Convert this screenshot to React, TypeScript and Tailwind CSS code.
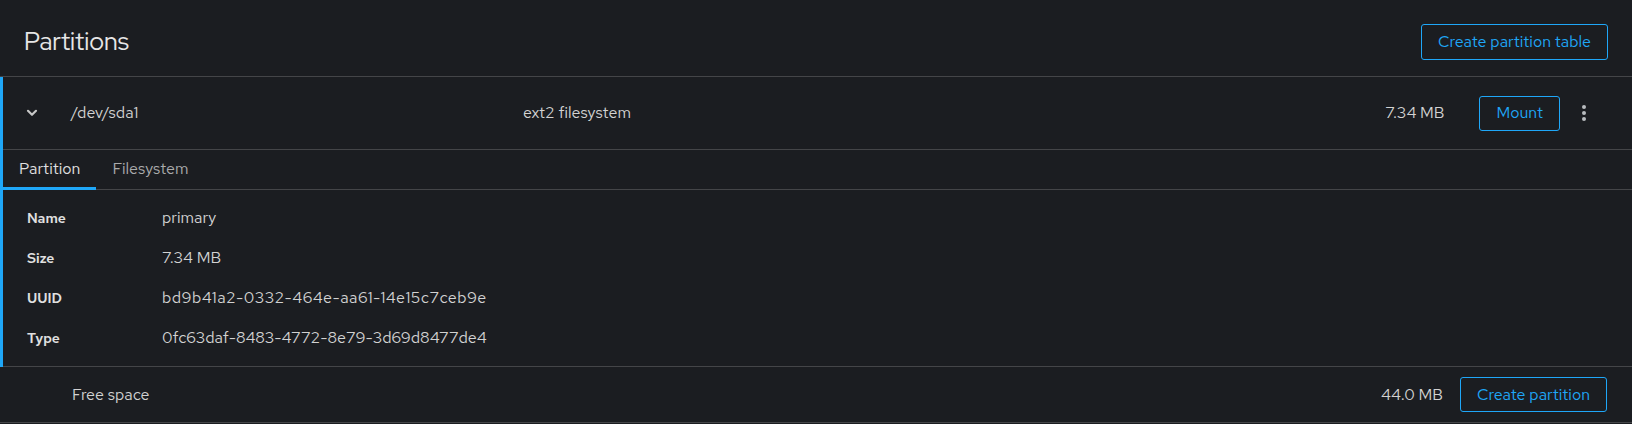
import { useState } from "react";

const font = "font-['Red_Hat_Text','Inter','Noto_Sans',sans-serif]";

function Chevron() {
  return (
    <svg width="12" height="8" viewBox="0 0 12 8" fill="none">
      <path d="M2 1.8 L6 5.8 L10 1.8" stroke="#c7c7c7" strokeWidth="2.2" strokeLinecap="round" strokeLinejoin="round" />
    </svg>
  );
}

function Kebab() {
  return (
    <svg width="6" height="18" viewBox="0 0 6 18" fill="#b8bbbe">
      <circle cx="3" cy="3" r="2" />
      <circle cx="3" cy="9" r="2" />
      <circle cx="3" cy="15" r="2" />
    </svg>
  );
}

function OutlineButton({ children, className = "" }: { children: React.ReactNode; className?: string }) {
  return (
    <button
      className={`h-9 px-4 rounded-[3px] border border-[#1fa7f8] text-[#1fa7f8] text-[16px] leading-6 bg-transparent ${className}`}
    >
      {children}
    </button>
  );
}

const details = [
  { label: "Name", value: "primary", wide: false },
  { label: "Size", value: "7.34 MB", wide: false },
  { label: "UUID", value: "bd9b41a2-0332-464e-aa61-14e15c7ceb9e", wide: true },
  { label: "Type", value: "0fc63daf-8483-4772-8e79-3d69d8477de4", wide: false },
];

export default function App() {
  const [tab, setTab] = useState("partition");

  return (
    <div className={`w-[1632px] h-[424px] bg-[#1b1d21] text-[#d2d2d2] ${font}`}>
      {/* Header */}
      <div className="flex items-center justify-between pl-6 pr-6 pt-6 pb-4 border-b border-[#444548]">
        <h1 className="text-[25px] leading-9 text-[#e6e6e6] font-['Red_Hat_Display','Inter',sans-serif]">Partitions</h1>
        <OutlineButton>Create partition table</OutlineButton>
      </div>

      {/* Expanded partition */}
      <div className="border-l-[3px] border-[#1fa7f8]">
        <div className="flex items-center h-[73px] border-b border-[#444548]">
          <div className="w-[68px] pl-[23px] flex items-center">
            <Chevron />
          </div>
          <span className="w-[452px] text-[16px]">/dev/sda1</span>
          <span className="flex-1 text-[16px]">ext2 filesystem</span>
          <span className="text-[16px]">7.34 MB</span>
          <OutlineButton className="ml-[35px] !h-[35px]">Mount</OutlineButton>
          <div className="w-[48px] mr-6 flex justify-center">
            <Kebab />
          </div>
        </div>

        {/* Tabs */}
        <div className="flex h-10 border-b border-[#444548]">
          {[
            { id: "partition", label: "Partition" },
            { id: "filesystem", label: "Filesystem" },
          ].map((t) => (
            <button
              key={t.id}
              onClick={() => setTab(t.id)}
              className={`px-4 text-[16px] -mb-px border-b-[3px] ${
                tab === t.id ? "border-[#1fa7f8] text-[#e0e0e0]" : "border-transparent text-[#aaabac]"
              }`}
            >
              {t.label}
            </button>
          ))}
        </div>

        {/* Details */}
        <div className="py-2 border-b border-[#444548]">
          {details.map((d) => (
            <div key={d.label} className="flex items-center h-10">
              <span className="w-[159px] pl-6 text-[14px] font-semibold text-[#e0e0e0]">{d.label}</span>
              <span className={`text-[16px] ${d.wide ? "tracking-[0.45px]" : ""}`}>{d.value}</span>
            </div>
          ))}
        </div>
      </div>

      {/* Free space */}
      <div className="flex items-center h-[56px] border-b border-[#444548]">
        <span className="flex-1 pl-[72px] text-[16px]">Free space</span>
        <span className="text-[16px]">44.0 MB</span>
        <OutlineButton className="ml-[17px] mr-[25px] !h-[35px]">Create partition</OutlineButton>
      </div>
    </div>
  );
}
